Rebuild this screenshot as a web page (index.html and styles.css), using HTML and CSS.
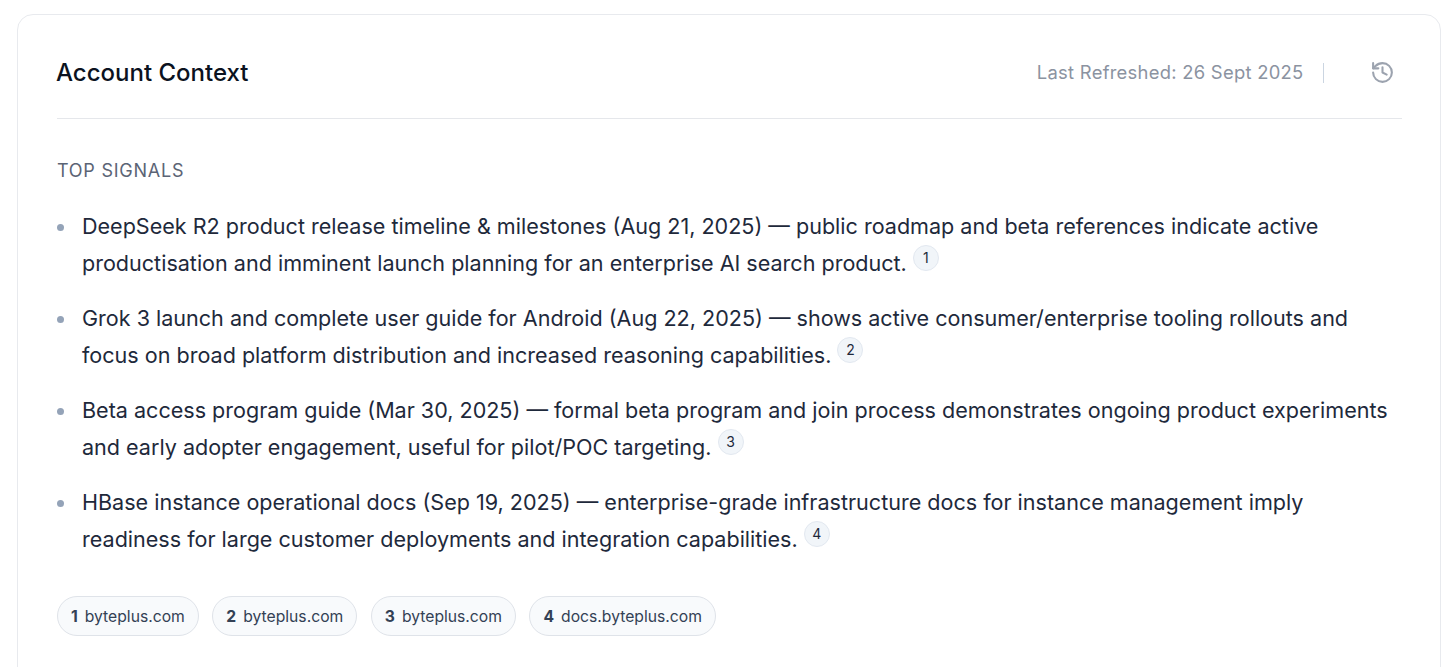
FILE: index.html
```html
<!DOCTYPE html>
<html lang="en">
<head>
    <meta charset="UTF-8">
    <meta name="viewport" content="width=device-width, initial-scale=1.0">
    <title>Account Context</title>
    <link rel="stylesheet" href="styles.css">
</head>
<body>
    <main class="card">
        <!-- Header -->
        <header class="card-header">
            <h1 class="card-title">Account Context</h1>
            <div class="refresh">
                <span class="refresh-text">Last Refreshed: 26 Sept 2025</span>
                <span class="refresh-sep"></span>
                <svg class="refresh-icon" viewBox="0 0 24 24" fill="none" stroke="currentColor" stroke-width="2" stroke-linecap="round" stroke-linejoin="round">
                    <path d="M3 12a9 9 0 1 0 9-9 9.75 9.75 0 0 0-6.74 2.74L3 8"/>
                    <path d="M3 3v5h5"/>
                    <path d="M12 7v5l4 2"/>
                </svg>
            </div>
        </header>

        <!-- Signals -->
        <section>
            <h2 class="section-label">TOP SIGNALS</h2>
            <ul class="signals">
                <li>DeepSeek R2 product release timeline &amp; milestones (Aug 21, 2025) — public roadmap and beta references indicate active productisation and imminent launch planning for an enterprise AI search product. <span class="cite">1</span></li>
                <li>Grok 3 launch and complete user guide for Android (Aug 22, 2025) — shows active consumer/enterprise tooling rollouts and focus on broad platform distribution and increased reasoning capabilities. <span class="cite">2</span></li>
                <li>Beta access program guide (Mar 30, 2025) — formal beta program and join process demonstrates ongoing product experiments and early adopter engagement, useful for pilot/POC targeting. <span class="cite">3</span></li>
                <li>HBase instance operational docs (Sep 19, 2025) — enterprise-grade infrastructure docs for instance management imply readiness for large customer deployments and integration capabilities. <span class="cite">4</span></li>
            </ul>
        </section>

        <!-- Sources -->
        <div class="sources">
            <a class="source"><b>1</b>byteplus.com</a>
            <a class="source"><b>2</b>byteplus.com</a>
            <a class="source"><b>3</b>byteplus.com</a>
            <a class="source"><b>4</b>docs.byteplus.com</a>
        </div>
    </main>
</body>
</html>
```

FILE: styles.css
```css
html, body {
    height: 100%;
}
body {
    font-family: Inter, "Liberation Sans", sans-serif;
    background-color: #fff;
    color: #1e293b;
    margin: 0;
    padding: 14px 15px 0 17px;
    box-sizing: border-box;
    overflow: hidden;
}
.card {
    background-color: #fff;
    border: 1px solid #e8eaee;
    border-radius: 16px;
    padding: 0 38px 60px 39px;
}
.card-header {
    display: flex;
    justify-content: space-between;
    align-items: center;
    height: 91px;
    padding-top: 12px;
    border-bottom: 1px solid #e5e7eb;
}
.card-title {
    margin: 0 0 0 -1px;
    font-size: 24px;
    font-weight: 500;
    color: #0b1220;
}
.refresh {
    display: flex;
    align-items: center;
    color: #9ca3af;
}
.refresh-text {
    margin-bottom: 2px;
    font-size: 18.4px;
    letter-spacing: 0.27px;
    color: #8b93a1;
}
.refresh-sep {
    width: 1.5px;
    height: 20px;
    margin: 0 46px 0 19px;
    background-color: #cbd5e1;
}
.refresh-icon {
    width: 25px;
    height: 25px;
    margin-right: 7px;
}
.section-label {
    margin: 40px 0 0;
    font-size: 18px;
    line-height: 24px;
    font-weight: 400;
    letter-spacing: 0.76px;
    color: #5b6475;
}
.signals {
    list-style: none;
    margin: 25px 0 0;
    padding: 0;
}
.signals li {
    position: relative;
    padding-left: 25px;
    margin-bottom: 18px;
    font-size: 21.55px;
    line-height: 37px;
}
.signals li::before {
    content: "";
    position: absolute;
    left: 0;
    top: 16px;
    width: 7px;
    height: 7px;
    border-radius: 50%;
    background-color: #94a3b8;
}
.cite {
    display: inline-flex;
    align-items: center;
    justify-content: center;
    width: 26px;
    height: 26px;
    border: 1px solid #e2e8f0;
    border-radius: 50%;
    background-color: #f1f5f9;
    box-sizing: border-box;
    font-size: 14px;
    line-height: 1;
    vertical-align: 8px;
    color: #1e293b;
}
.sources {
    display: flex;
    gap: 13.5px;
    margin-top: 38px;
}
.source {
    display: flex;
    align-items: center;
    gap: 7px;
    height: 40px;
    box-sizing: border-box;
    padding: 0 13px;
    border: 1px solid #dfe3e9;
    border-radius: 20px;
    background-color: #f8fafc;
    font-size: 15.7px;
    color: #334155;
}
.source b {
    font-weight: 700;
}
```
